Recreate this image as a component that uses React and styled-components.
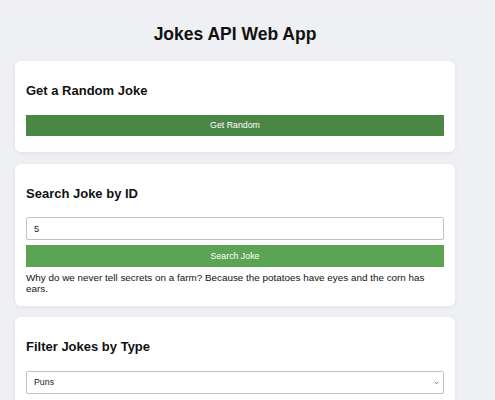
import { useState } from "react";
import styled, { createGlobalStyle } from "styled-components";

const GlobalStyle = createGlobalStyle`
  html, body {
    margin: 0;
    padding: 0;
    background: #eff0f4;
    font-family: "Liberation Sans", Arial, sans-serif;
    color: #111;
  }
`;

function App() {
  const [jokeId, setJokeId] = useState("5");
  const [type, setType] = useState("puns");

  return (
    <>
      <GlobalStyle />
      <Page>
        <Title>Jokes API Web App</Title>

        <Card>
          <CardTitle>Get a Random Joke</CardTitle>
          <Button $tone="dark">Get Random</Button>
        </Card>

        <Card>
          <CardTitle>Search Joke by ID</CardTitle>
          <Field
            type="text"
            value={jokeId}
            onChange={(e) => setJokeId(e.target.value)}
          />
          <Button>Search Joke</Button>
          <JokeText>
            Why do we never tell secrets on a farm? Because the potatoes have
            eyes and the corn has ears.
          </JokeText>
        </Card>

        <Card>
          <CardTitle>Filter Jokes by Type</CardTitle>
          <SelectWrap>
            <Select value={type} onChange={(e) => setType(e.target.value)}>
              <option value="puns">Puns</option>
              <option value="general">General</option>
              <option value="programming">Programming</option>
            </Select>
            <Chevron viewBox="0 0 10 6" aria-hidden="true">
              <path d="M1 1l4 4 4-4" />
            </Chevron>
          </SelectWrap>
        </Card>
      </Page>
    </>
  );
}

const Page = styled.div`
  border-top: 1px solid #f4ebee;
  padding: 23px 15px 20px;
  width: 440px;
  min-height: 400px;
  box-sizing: content-box;
`;

const Title = styled.h1`
  margin: 0 0 17px;
  text-align: center;
  font-size: 17.5px;
  font-weight: bold;
  line-height: 20px;
`;

const Card = styled.section`
  background: #fff;
  border-radius: 6px;
  padding: 11px;
  margin-bottom: 11.5px;
  box-shadow: 0 1px 4px rgba(0, 0, 0, 0.07);
`;

const CardTitle = styled.h2`
  margin: 12px 0 16px;
  font-size: 13px;
  font-weight: bold;
  line-height: 14.5px;
`;

const Button = styled.button`
  display: block;
  width: 100%;
  height: 21.5px;
  margin: 5px 0;
  padding: 0;
  border: none;
  border-radius: 0;
  background: ${(p) => (p.$tone === "dark" ? "#4a8745" : "#5ba454")};
  color: #fff;
  font-family: "Liberation Sans", Arial, sans-serif;
  font-size: 8.8px;
  cursor: pointer;
`;

const Field = styled.input`
  display: block;
  box-sizing: border-box;
  width: 100%;
  height: 23px;
  margin: 5px 0;
  padding: 0 7px;
  border: 1px solid #c3c3c3;
  border-radius: 2px;
  font-family: "Liberation Sans", Arial, sans-serif;
  font-size: 9.2px;
  color: #222;
`;

const SelectWrap = styled.div`
  position: relative;
  margin: 5px 0;
`;

const Select = styled.select`
  display: block;
  box-sizing: border-box;
  width: 100%;
  height: 23.5px;
  margin: 0;
  padding: 0 7px;
  border: 1px solid #c3c3c3;
  border-radius: 2px;
  background: #fff;
  appearance: none;
  font-family: "Liberation Sans", Arial, sans-serif;
  font-size: 8.8px;
  color: #222;
`;

const Chevron = styled.svg`
  position: absolute;
  right: 5px;
  top: 10px;
  width: 5px;
  height: 3.5px;
  fill: none;
  stroke: #555;
  stroke-width: 1.6;
  pointer-events: none;
`;

const JokeText = styled.p`
  margin: 0;
  font-size: 9.9px;
  line-height: 11.5px;
  color: #111;
`;

export default App;
